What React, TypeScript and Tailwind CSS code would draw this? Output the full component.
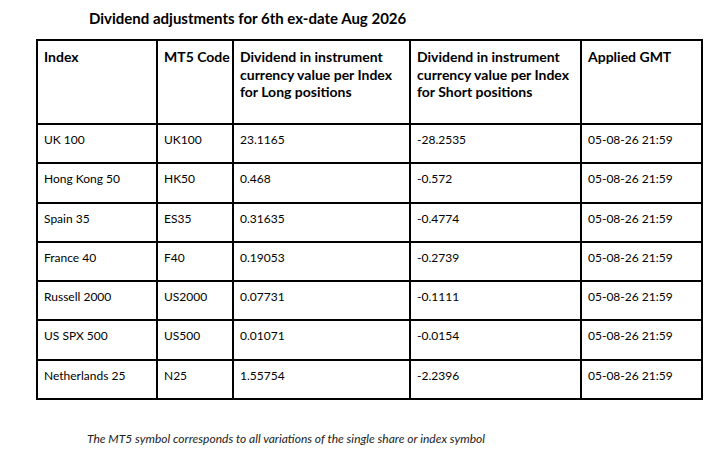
const ROWS = [
  { index: "UK 100", code: "UK100", long: "23.1165", short: "-28.2535", applied: "05-08-26 21:59" },
  { index: "Hong Kong 50", code: "HK50", long: "0.468", short: "-0.572", applied: "05-08-26 21:59" },
  { index: "Spain 35", code: "ES35", long: "0.31635", short: "-0.4774", applied: "05-08-26 21:59" },
  { index: "France 40", code: "F40", long: "0.19053", short: "-0.2739", applied: "05-08-26 21:59" },
  { index: "Russell 2000", code: "US2000", long: "0.07731", short: "-0.1111", applied: "05-08-26 21:59" },
  { index: "US SPX 500", code: "US500", long: "0.01071", short: "-0.0154", applied: "05-08-26 21:59" },
  { index: "Netherlands 25", code: "N25", long: "1.55754", short: "-2.2396", applied: "05-08-26 21:59" },
];

const th = "border-2 border-black px-[6px] pt-[7px] align-top text-left font-bold text-[14px] leading-[17.5px] whitespace-nowrap";
const td = "border-2 border-black px-[6px] pt-[6px] align-top text-[12px] leading-[17px] whitespace-nowrap";

export default function App() {
  return (
    <div className="h-[457px] w-[723px] bg-white text-black [font-family:Lato,'Open_Sans',sans-serif]">
      <div className="pl-[89px] pt-[9px] text-[15px] font-bold leading-[18px]">
        Dividend adjustments for 6th ex-date Aug 2026
      </div>

      <table className="ml-[36px] mt-[12px] w-[667px] table-fixed border-collapse">
        <colgroup>
          <col className="w-[120px]" />
          <col className="w-[76px]" />
          <col className="w-[177px]" />
          <col className="w-[171px]" />
          <col className="w-[121px]" />
        </colgroup>
        <thead>
          <tr className="h-[84px]">
            <th className={th}>Index</th>
            <th className={th}>MT5 Code</th>
            <th className={th}>
              Dividend in instrument
              <br />
              currency value per Index
              <br />
              for Long positions
            </th>
            <th className={th}>
              Dividend in instrument
              <br />
              currency value per Index
              <br />
              for Short positions
            </th>
            <th className={th}>Applied GMT</th>
          </tr>
        </thead>
        <tbody>
          {ROWS.map((r) => (
            <tr key={r.code} className="h-[39.3px]">
              <td className={td}>{r.index}</td>
              <td className={td}>{r.code}</td>
              <td className={td}>{r.long}</td>
              <td className={td}>{r.short}</td>
              <td className={td}>{r.applied}</td>
            </tr>
          ))}
        </tbody>
      </table>

      <p className="mt-[32px] pl-[87px] text-[12px] italic leading-[14px] text-[#222]">
        The MT5 symbol corresponds to all variations of the single share or index symbol
      </p>
    </div>
  );
}
